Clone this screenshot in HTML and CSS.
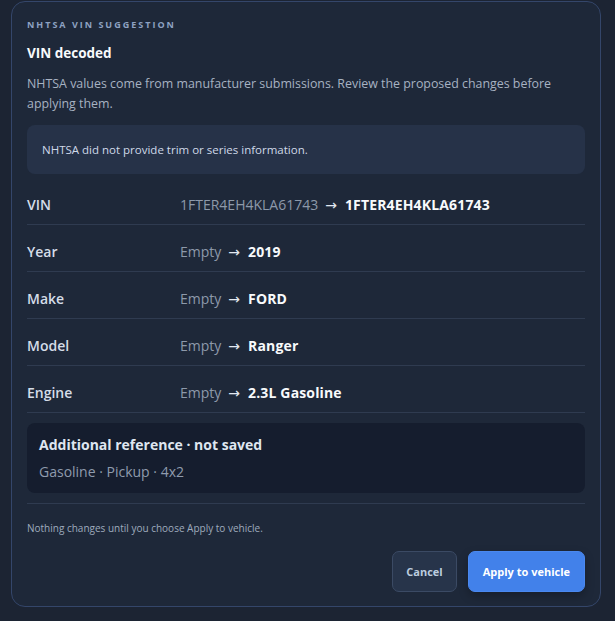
FILE: index.html
```html
<!DOCTYPE html>
<html lang="en">
<head>
<meta charset="utf-8">
<title>NHTSA VIN suggestion</title>
<link rel="stylesheet" href="styles.css">
</head>
<body>
<section class="card">
  <div class="eyebrow">NHTSA VIN SUGGESTION</div>
  <h2 class="title">VIN decoded</h2>
  <p class="intro">NHTSA values come from manufacturer submissions. Review the proposed changes before applying them.</p>
  <div class="note">NHTSA did not provide trim or series information.</div>
  <div class="rows">
    <div class="row"><span class="label">VIN</span><span class="value"><span class="old">1FTER4EH4KLA61743</span><span class="arrow">→</span><strong class="new">1FTER4EH4KLA61743</strong></span></div>
    <div class="row"><span class="label">Year</span><span class="value"><span class="old">Empty</span><span class="arrow">→</span><strong class="new">2019</strong></span></div>
    <div class="row"><span class="label">Make</span><span class="value"><span class="old">Empty</span><span class="arrow">→</span><strong class="new">FORD</strong></span></div>
    <div class="row"><span class="label">Model</span><span class="value"><span class="old">Empty</span><span class="arrow">→</span><strong class="new">Ranger</strong></span></div>
    <div class="row"><span class="label">Engine</span><span class="value"><span class="old">Empty</span><span class="arrow">→</span><strong class="new">2.3L Gasoline</strong></span></div>
  </div>
  <div class="extra">
    <div class="extra-title">Additional reference · not saved</div>
    <div class="extra-body">Gasoline · Pickup · 4x2</div>
  </div>
  <div class="footer">
    <p class="hint">Nothing changes until you choose Apply to vehicle.</p>
    <div class="actions">
      <button class="btn btn-secondary" type="button">Cancel</button>
      <button class="btn btn-primary" type="button">Apply to vehicle</button>
    </div>
  </div>
</section>
</body>
</html>
```
FILE: styles.css
```css
* { box-sizing: border-box; }
html, body { margin: 0; padding: 0; }
body {
  background: #1c2433;
  font-family: "Open Sans", "Noto Sans", "DejaVu Sans", sans-serif;
  color: #e2e8f0;
  padding: 1px 14px 14px 11px;
}
.card {
  width: 590px;
  background: #1e2839;
  border: 1px solid #34466a;
  border-radius: 14px;
  padding: 15px 15px 14px;
}
.eyebrow {
  font-size: 9px;
  font-weight: 700;
  letter-spacing: 2px;
  color: #8ea2c2;
  line-height: 16px;
}
.title {
  margin: 10px 0 0;
  font-size: 13.5px;
  font-weight: 700;
  color: #f8fafc;
  line-height: 20px;
}
.intro {
  margin: 11px 0 0;
  font-size: 12.4px;
  line-height: 20px;
  color: #a7b2c2;
}
.note {
  margin-top: 11px;
  background: #263248;
  border-radius: 8px;
  padding: 15px 15px;
  font-size: 11.5px;
  line-height: 19px;
  color: #cfd9e8;
}
.rows { margin-top: 4px; }
.row {
  display: grid;
  grid-template-columns: 153px 1fr;
  padding: 16px 0 8px;
  border-bottom: 1px solid #2f3b50;
  line-height: 22px;
  font-size: 14px;
}
.label { color: #d5dde8; font-weight: 600; }
.old { color: #8d99aa; }
.arrow { color: #e2e8f0; margin: 0 8px 0 7px; }
.new { color: #f8fafc; font-weight: 700; letter-spacing: 0.15px; }
.extra {
  margin-top: 10px;
  background: #151d2e;
  border-radius: 8px;
  padding: 12px 12px 11px;
}
.extra-title {
  font-size: 14px;
  font-weight: 700;
  color: #dfe6f0;
  line-height: 20px;
}
.extra-body {
  margin-top: 7px;
  font-size: 14px;
  color: #8f9bad;
  line-height: 20px;
}
.footer {
  margin-top: 10px;
  border-top: 1px solid #2f3b50;
}
.hint {
  margin: 17px 0 0;
  font-size: 10px;
  line-height: 14px;
  color: #9fabbd;
}
.actions {
  display: flex;
  justify-content: flex-end;
  gap: 11px;
  margin-top: 16px;
}
.btn {
  height: 41px;
  border-radius: 7px;
  font-family: inherit;
  font-size: 11px;
  font-weight: 700;
  padding: 0 13px;
  cursor: pointer;
}
.btn-secondary {
  background: #27344a;
  border: 1px solid #3b4a64;
  color: #bcccdf;
}
.btn-primary {
  padding: 0 14px;
  background: #4281ea;
  border: 1px solid #4a88ef;
  color: #ffffff;
  box-shadow: 0 4px 10px rgba(0, 0, 0, 0.25);
}
```
